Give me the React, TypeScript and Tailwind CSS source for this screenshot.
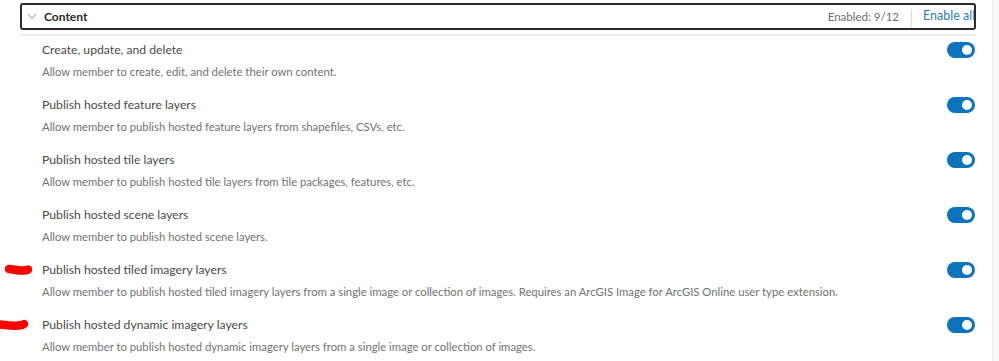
import React from "react";

interface Privilege {
    title: string;
    description: string;
    marked?: "a" | "b";
}

const PRIVILEGES: Privilege[] = [
    { title: "Create, update, and delete", description: "Allow member to create, edit, and delete their own content." },
    { title: "Publish hosted feature layers", description: "Allow member to publish hosted feature layers from shapefiles, CSVs, etc." },
    { title: "Publish hosted tile layers", description: "Allow member to publish hosted tile layers from tile packages, features, etc." },
    { title: "Publish hosted scene layers", description: "Allow member to publish hosted scene layers." },
    {
        title: "Publish hosted tiled imagery layers",
        description:
            "Allow member to publish hosted tiled imagery layers from a single image or collection of images. Requires an ArcGIS Image for ArcGIS Online user type extension.",
        marked: "a",
    },
    {
        title: "Publish hosted dynamic imagery layers",
        description: "Allow member to publish hosted dynamic imagery layers from a single image or collection of images.",
        marked: "b",
    },
];

function Toggle() {
    return (
        <span className="relative mr-[1px] inline-flex h-[16px] w-[28px] shrink-0 items-center rounded-full bg-[#0b74bd]">
            <span className="absolute right-[1px] h-[14px] w-[14px] rounded-full border-2 border-[#0b74bd] bg-white" />
        </span>
    );
}

function RedMark({ variant }: { variant: "a" | "b" }) {
    // annotation scribble drawn over the page
    return variant === "a" ? (
        <svg className="absolute left-[4px] top-[7px]" width="28" height="14" viewBox="0 0 28 14">
            <path d="M5 6 C10 6.5, 15 7.5, 19 7.5 S23 7, 24 6.5" stroke="#ff0000" strokeWidth="8.5" fill="none" strokeLinecap="round" />
        </svg>
    ) : (
        <svg className="absolute left-0 top-[7px]" width="30" height="14" viewBox="0 0 30 14">
            <path d="M0 6.5 C6 7.5, 12 8, 18 7.5 S23 6.5, 24 6" stroke="#ff0000" strokeWidth="8.5" fill="none" strokeLinecap="round" />
        </svg>
    );
}

export default function App() {
    return (
        <div className="relative flex h-[361px] w-full overflow-hidden bg-white" style={{ fontFamily: "Lato, 'Open Sans', sans-serif" }}>
            <div className="ml-[20px] mt-[3px] w-[956px]">
                <div className="flex h-[27px] items-center overflow-hidden rounded-[3px] border-2 border-[#2a2a2a]">
                    <svg className="ml-[5px]" width="10" height="7" viewBox="0 0 10 7">
                        <path d="M1 1 L5 5.5 L9 1" stroke="#8a8a8a" strokeWidth="1" fill="none" />
                    </svg>
                    <span className="ml-[7px] text-[12px] font-bold text-[#2b2b2b]">Content</span>
                    <span className="ml-auto text-[11.5px] text-[#6e6e6e]">Enabled: 9/12</span>
                    <span className="ml-[12px] h-[19px] w-px self-end bg-[#dcdcdc]" />
                    <span className="ml-[11px] w-[51px] shrink-0 overflow-hidden whitespace-nowrap text-[12.5px] text-[#2f7cc0]">Enable all</span>
                </div>
                <div className="mt-[4px] h-[2px] bg-[#ececec]" />
                <div>
                    {PRIVILEGES.map((p) => (
                        <div key={p.title} className="relative -ml-[20px] flex h-[55px] items-start pl-[42px] pt-[6px]">
                            {p.marked && <RedMark variant={p.marked} />}
                            <div className="flex-1">
                                <p className="text-[12.2px] leading-[16px] text-[#4a4a4a]">{p.title}</p>
                                <p className="mt-[7px] text-[11.3px] leading-[14px] text-[#727272]">{p.description}</p>
                            </div>
                            <Toggle />
                        </div>
                    ))}
                </div>
            </div>
            <div className="ml-auto h-full w-[7px] border-l border-[#ececec] bg-[#f8f8f8]" />
        </div>
    );
}
